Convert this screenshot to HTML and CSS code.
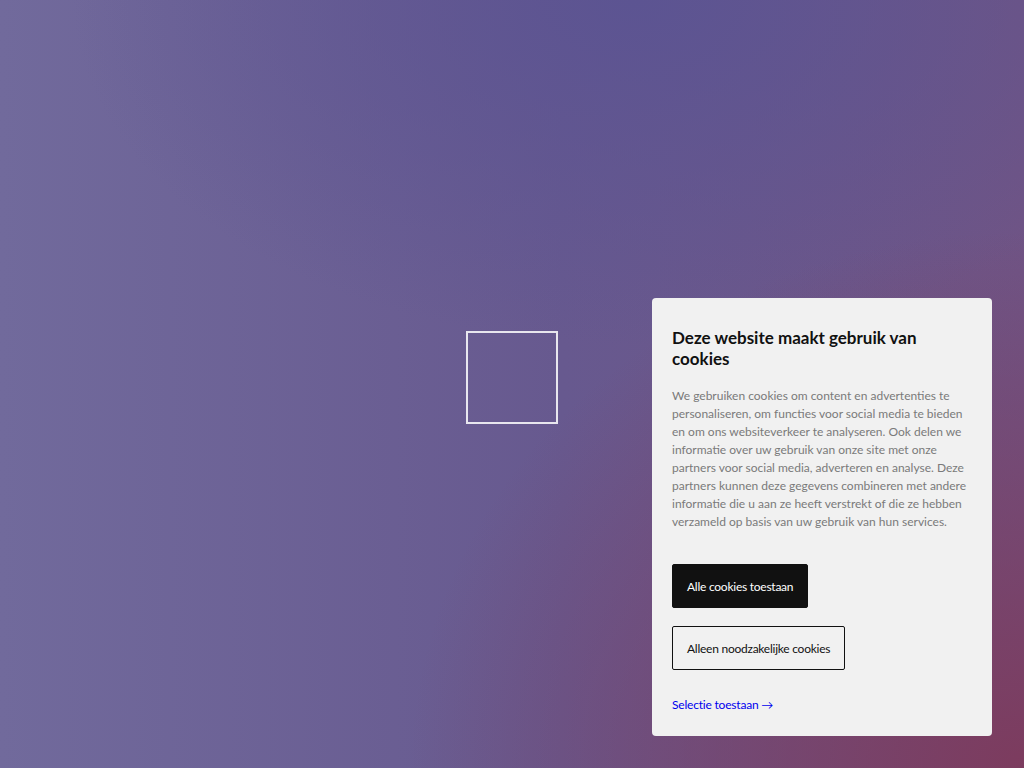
FILE: index.html
```html
<!doctype html>
<html>
<head>
<meta charset="utf-8" />
<meta name="viewport" content="width=device-width" />
<title>Cookies</title>
<link rel="stylesheet" href="styles.css">
</head>
<body>

<div class="loader"></div>

<div class="cookie-panel">
  <h2 class="cookie-title">Deze website maakt gebruik van cookies</h2>
  <p class="cookie-text">
    We gebruiken cookies om content en advertenties te personaliseren, om functies voor social media te bieden en om ons websiteverkeer te analyseren. Ook delen we informatie over uw gebruik van onze site met onze partners voor social media, adverteren en analyse. Deze partners kunnen deze gegevens combineren met andere informatie die u aan ze heeft verstrekt of die ze hebben verzameld op basis van uw gebruik van hun services.
  </p>
  <div class="cookie-actions">
    <button class="btn btn--dark">Alle cookies toestaan</button>
    <button class="btn btn--outline">Alleen noodzakelijke cookies</button>
  </div>
  <a class="cookie-link" href="#">Selectie toestaan &rarr;</a>
</div>

</body>
</html>
```

FILE: styles.css
```css
* { box-sizing: border-box; }

html, body { height: 100%; }

body {
  margin: 0;
  font-family: Lato, "Open Sans", sans-serif;
  background:
    radial-gradient(ellipse 60% 70% at 100% 100%, rgba(125, 58, 92, 0.95), rgba(125, 58, 92, 0) 100%),
    radial-gradient(ellipse 55% 45% at 62% 0%, rgba(92, 84, 146, 1), rgba(92, 84, 146, 0) 100%),
    linear-gradient(to right, #716a9c 0%, #67598f 55%, #6f5485 100%);
  overflow: hidden;
}

/* spinner box in the middle of the viewport */
.loader {
  position: fixed;
  left: 466px;
  top: 331px;
  width: 92px;
  height: 93px;
  border: 2px solid rgba(255, 255, 255, 0.85);
}

.cookie-panel {
  position: fixed;
  right: 32px;
  bottom: 32px;
  width: 340px;
  padding: 29px 20px 24px;
  background: #f1f1f1;
  border-radius: 4px;
}

.cookie-title {
  margin: 0 0 18px;
  font-size: 17px;
  line-height: 21px;
  font-weight: 700;
  color: #111;
}

.cookie-text {
  margin: 0 0 33px;
  font-size: 12px;
  line-height: 18px;
  color: #7a7a7a;
}

.cookie-actions {
  display: flex;
  flex-direction: column;
  align-items: flex-start;
  gap: 18px;
  margin-bottom: 23px;
}

.btn {
  height: 44px;
  padding: 0 14px;
  font-family: inherit;
  font-size: 12px;
  letter-spacing: -0.25px;
  border-radius: 2px;
  cursor: pointer;
}

.btn--dark {
  background: #111;
  color: #fff;
  border: 1px solid #111;
}

.btn--outline {
  background: transparent;
  color: #111;
  border: 1px solid #111;
}

.cookie-link {
  font-size: 12px;
  letter-spacing: -0.2px;
  color: #0000ee;
  text-decoration: none;
}
```
